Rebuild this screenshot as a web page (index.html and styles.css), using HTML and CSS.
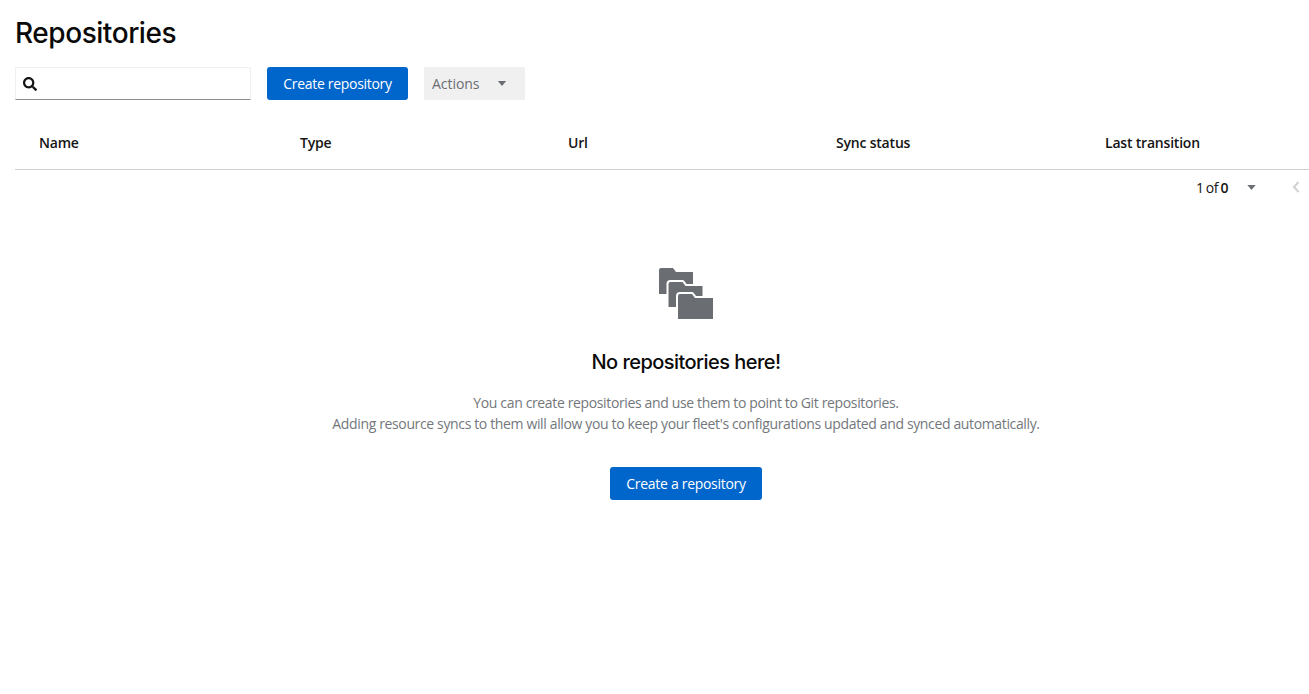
FILE: index.html
```html
<!DOCTYPE html>
<html lang="en">
<head>
<meta charset="utf-8">
<title>Repositories</title>
<link rel="stylesheet" href="styles.css">
</head>
<body>
<main class="page">
  <h1 class="title">Repositories</h1>
  <div class="toolbar">
    <div class="search">
      <svg class="search-icon" viewBox="0 0 512 512" aria-hidden="true"><path d="M505 442.700L405.300 343c-4.500-4.500-10.600-7-17-7H372c27.600-35.300 44-79.700 44-128C416 93.100 322.900 0 208 0S0 93.100 0 208s93.100 208 208 208c48.300 0 92.700-16.400 128-44v16.300c0 6.400 2.500 12.500 7 17l99.700 99.700c9.400 9.400 24.600 9.400 33.900 0l28.300-28.300c9.400-9.400 9.400-24.600.1-34zM208 336c-70.700 0-128-57.200-128-128 0-70.700 57.200-128 128-128 70.700 0 128 57.200 128 128 0 70.700-57.200 128-128 128z"/></svg>
    </div>
    <button class="btn btn-primary btn-create">Create repository</button>
    <button class="btn btn-disabled">Actions<svg class="caret" viewBox="0 0 10 6" aria-hidden="true"><path d="M0 0h10L5 6z"/></svg></button>
  </div>
  <div class="table-head">
    <div class="th th-first">Name</div>
    <div class="th">Type</div>
    <div class="th">Url</div>
    <div class="th">Sync status</div>
    <div class="th">Last transition</div>
  </div>
  <div class="pagination">
    <span class="count"><span>1 of</span> <b>0</b></span>
    <svg class="page-caret" viewBox="0 0 10 6" aria-hidden="true"><path d="M0 0h10L5 6z"/></svg>
    <svg class="page-prev" viewBox="0 0 8 12" aria-hidden="true"><path d="M6.500 1L2 6l4.500 5" fill="none" stroke-width="2"/></svg>
  </div>
  <section class="empty">
    <svg class="folders" viewBox="0 0 54 51" aria-hidden="true">
      <path class="f" d="M0 2a2 2 0 0 1 2-2h12l3 4h17v22H0z"/>
      <path class="f" d="M9.500 16a2 2 0 0 1 2-2h12l3 4h17v21H9.500z"/>
      <path class="f" d="M19 28a2 2 0 0 1 2-2h12l3 4h18v21H19z"/>
    </svg>
    <h2 class="empty-title">No repositories here!</h2>
    <p class="empty-text">You can create repositories and use them to point to Git repositories.<br>Adding resource syncs to them will allow you to keep your fleet's configurations updated and synced automatically.</p>
    <button class="btn btn-primary btn-empty">Create a repository</button>
  </section>
</main>
</body>
</html>
```
FILE: styles.css
```css
* { box-sizing: border-box; }
html, body { margin: 0; padding: 0; background: #fff; }
body { font-family: "Open Sans", "Liberation Sans", sans-serif; color: #151515; height: 694px; overflow: hidden; }
.page { padding: 15px 0 0 15px; }
.title { margin: 0; font-family: Inter, sans-serif; font-size: 28px; font-weight: 450; line-height: 36px; color: #0a0a0a; letter-spacing: -0.45px; }
.toolbar { display: flex; align-items: stretch; margin-top: 16px; height: 33px; }
.search { width: 236px; height: 33px; border: 1px solid #f0f0f0; border-bottom: 1px solid #8a8d90; display: flex; align-items: center; padding-left: 7px; }
.search-icon { width: 14px; height: 14px; fill: #151515; }
.btn { font-family: inherit; font-size: 14px; letter-spacing: -0.3px; border: 0; border-radius: 3px; padding: 0; height: 33px; cursor: pointer; }
.btn-primary { background: #06c; color: #fff; }
.btn-create { width: 141px; margin-left: 16px; }
.btn-disabled { margin-left: 16px; width: 101px; background: #f0f0f0; color: #6a6e73; border-radius: 0; display: flex; align-items: center; padding-left: 8px; letter-spacing: -0.05px; }
.caret { width: 10px; height: 5px; fill: #6a6e73; margin-left: 18px; }
.table-head { display: grid; grid-template-columns: 269px 268px 268px 269px 1fr; margin-top: 24px; height: 46px; border-bottom: 1px solid #d2d2d2; }
.th { padding: 8px 0 0 16px; font-size: 14px; font-weight: 600; line-height: 21px; color: #151515; letter-spacing: -0.2px; }
.th-first { padding-left: 24px; }
.pagination { display: flex; align-items: center; justify-content: flex-end; height: 34px; padding-right: 9px; }
.count { font-size: 14px; line-height: 21px; letter-spacing: -0.4px; word-spacing: -1px; }
.count b { font-weight: 600; }
.page-caret { width: 9px; height: 5px; fill: #6a6e73; margin-left: 19px; }
.page-prev { width: 8px; height: 12px; stroke: #d2d2d2; margin-left: 36px; }
.empty { margin-left: 48px; display: flex; flex-direction: column; align-items: center; padding-top: 64px; }
.folders { width: 54px; height: 51px; display: block; }
.f { fill: #6a6e73; stroke: #fff; stroke-width: 4; stroke-linejoin: round; paint-order: stroke; }
.empty-title { margin: 28px 0 0; font-family: Inter, sans-serif; font-size: 20px; font-weight: 450; line-height: 30px; color: #0a0a0a; letter-spacing: -0.55px; }
.empty-text { margin: 15px 0 0; font-size: 14px; line-height: 21px; color: #73777c; text-align: center; letter-spacing: -0.36px; }
.btn-empty { margin-top: 33px; width: 152px; }
```
